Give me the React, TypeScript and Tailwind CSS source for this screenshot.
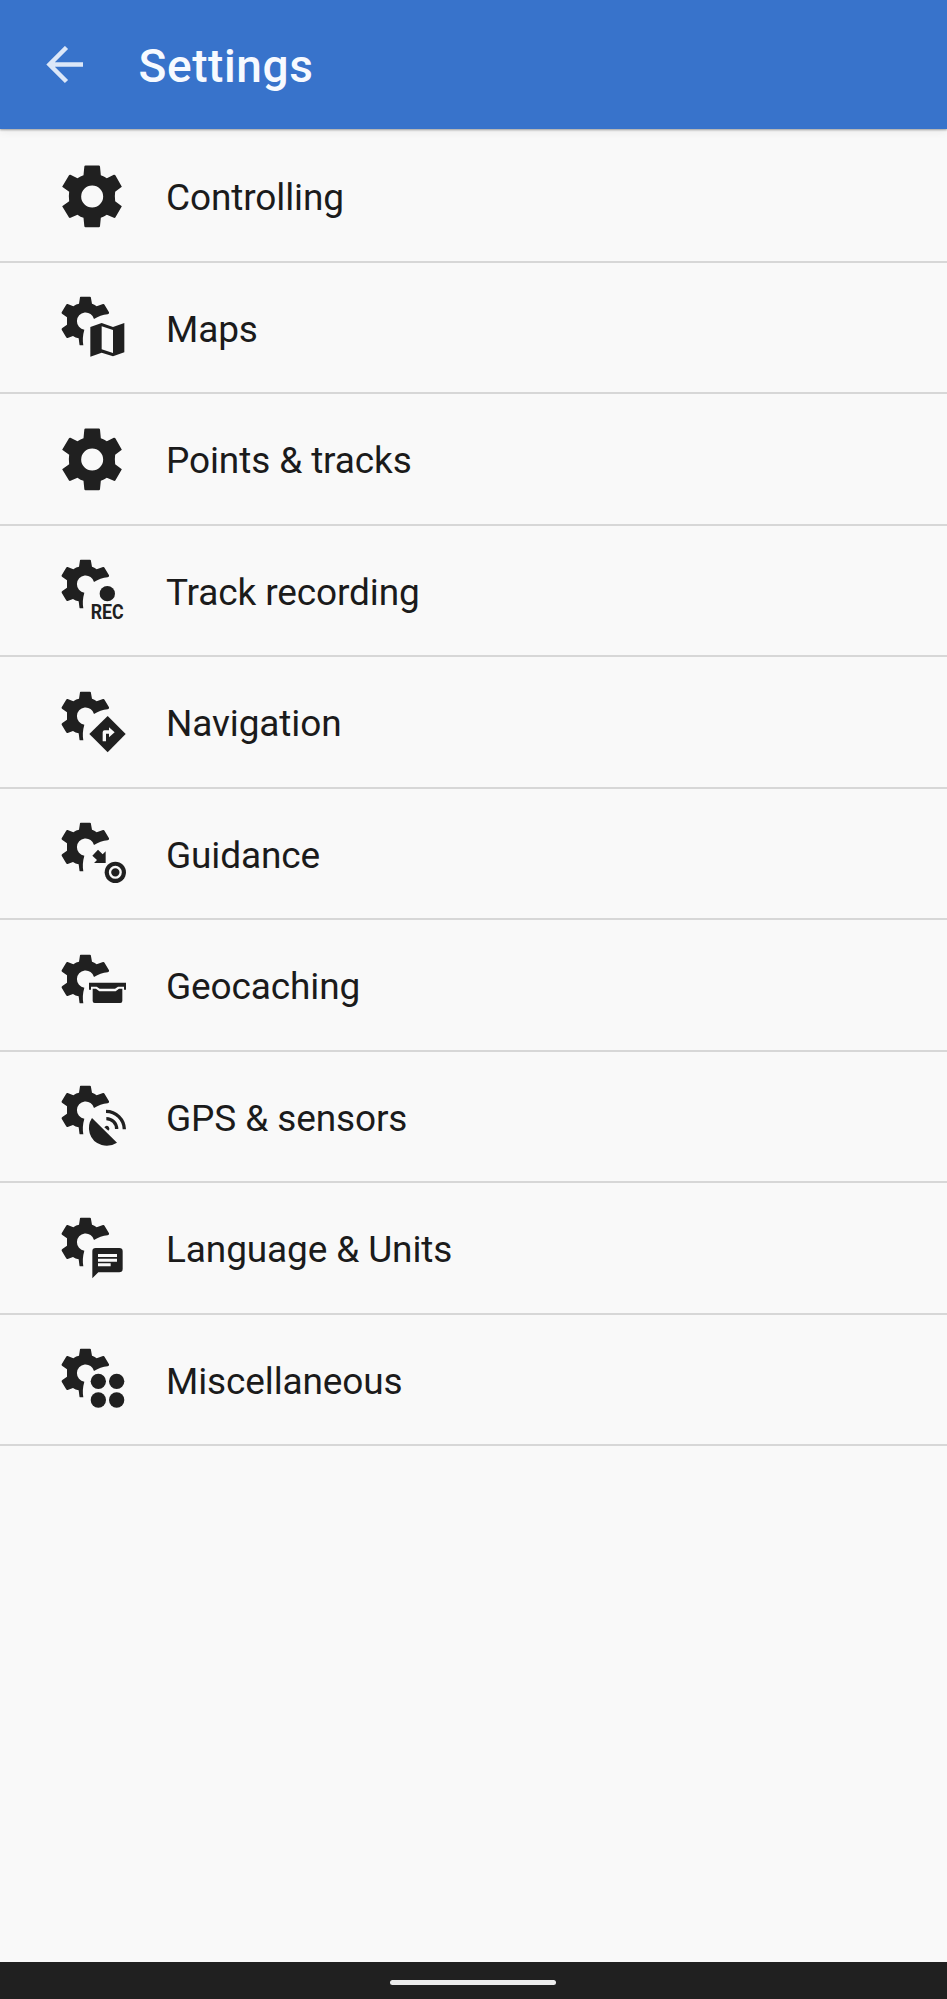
import type { ReactNode } from "react";

function PartialGear() {
  return (
    <path d="M92 35H120Q122 35 122.500 37L126 56Q133 58 140 64L159 57Q162 56 163.500 59L177 82Q179 87 173 88Q151 90 132 102A26 26 0 1 0 103 134Q96 158 100 181H91Q89 181 88.500 179L86 160Q76 158 69 153L53 159Q50 160 48.500 157L35 134Q34 131 37 129L51 119V97L36 86Q34 84 35 82L48.500 59Q50 56 53 57L70 64Q79 57 87 56L90 37Q90 35 92 35Z" />
  );
}

const FullGear = (
  <path
    fillRule="evenodd"
    transform="translate(-0.500 4.500)"
    d="M107 30H147Q150 30 150.500 33L153 59Q162 62 171 68L192 58Q195 57 196.500 59L216 94L196 109Q194 123 196 137L216 152L196.500 186Q195 188 192 187L171 178Q162 184 153 187L150.500 212Q150 215 147 215H107Q104 215 103.500 212L101 187Q92 185 83 178L62 187Q59 188 57.500 186L37 152L58 137Q56 123 58 109L37 94L57.500 59Q59 57 62 58L83 68Q92 62 101 59L103.500 33Q104 30 107 30ZM127 90A33 33 0 1 0 127 156A33 33 0 1 0 127 90Z"
  />
);

const MapBadge = (
  <path fillRule="evenodd" d="M121 126L155 114L189 126L223 114V202L189 214L155 203L121 215ZM155 124V193L189 204V135Z" />
);

const RecBadge = (
  <>
    <circle cx="172" cy="137" r="23" />
    <text x="122" y="213" fontSize="60" fontWeight="700" textLength="99" lengthAdjust="spacingAndGlyphs">
      REC
    </text>
  </>
);

const TurnBadge = (
  <>
    <path d="M173 108L227 162L173 217L118 162Z" />
    <path d="M158 184V157Q158 151 164 151H177V142L194 157L177 172V161H168V184Z" fill="#f9f9f9" />
  </>
);

const TargetBadge = (
  <>
    <path d="M144 116L158 130L167 121V156H132L141 147L127 134Z" />
    <circle cx="196" cy="184" r="32" />
    <circle cx="196" cy="184" r="16" fill="none" stroke="#f9f9f9" strokeWidth="7" />
  </>
);

const CacheBadge = (
  <>
    <path d="M117 119H228V140H222V131H204L195 137H149L140 131H123V140H117Z" />
    <path d="M128 137H138L148 145H197L207 137H217V174Q217 180 211 180H134Q128 180 128 174Z" />
  </>
);

const DishBadge = (
  <>
    <path d="M126 132L201 206Q179 220 155 213Q127 205 119 178Q112 153 126 132Z" />
    <path d="M163 160Q169 152 176 158Q181 164 175 170Z" />
    <g fill="none" stroke="#202020" strokeWidth="10">
      <path d="M168 112A55 55 0 0 1 223 166" />
      <path d="M169 134A31 31 0 0 1 200 165" />
    </g>
  </>
);

const MessageBadge = (
  <>
    <path d="M137 126H208Q218 126 218 136V189Q218 199 208 199H145L127 217V136Q127 126 137 126Z" />
    <path d="M144 144H201V153H144ZM144 158H201V167H144ZM144 172H182V181H144Z" fill="#f9f9f9" />
  </>
);

const DotsBadge = (
  <>
    <circle cx="145" cy="133" r="23" />
    <circle cx="200" cy="133" r="23" />
    <circle cx="145" cy="189" r="23" />
    <circle cx="200" cy="189" r="23" />
  </>
);

const items: { label: string; badge?: ReactNode }[] = [
  { label: "Controlling" },
  { label: "Maps", badge: MapBadge },
  { label: "Points & tracks" },
  { label: "Track recording", badge: RecBadge },
  { label: "Navigation", badge: TurnBadge },
  { label: "Guidance", badge: TargetBadge },
  { label: "Geocaching", badge: CacheBadge },
  { label: "GPS & sensors", badge: DishBadge },
  { label: "Language & Units", badge: MessageBadge },
  { label: "Miscellaneous", badge: DotsBadge },
];

export default function App() {
  return (
    <div className="flex h-[1999px] w-full flex-col overflow-hidden bg-[#f9f9f9] font-['Roboto',sans-serif]">
      <header className="z-10 flex h-[129px] shrink-0 items-center bg-[#3873cb] pl-[46px] shadow-[0_1px_2px_rgba(0,0,0,0.35),0_3px_8px_rgba(0,0,0,0.06)]">
        <svg className="h-[38px] w-[38px]" viewBox="0 0 38 38" fill="none" stroke="#dce7f8" strokeWidth="4.500">
          <path d="M20.500 1.500L3.500 18.500L20.500 35.500M3 18.500H37" />
        </svg>
        <h1 className="ml-[54.500px] mt-[2px] text-[46px] leading-none font-medium tracking-[0.6px] text-[#f7faff]">Settings</h1>
      </header>
      <main className="mt-[2.200px] grow">
        {items.map(({ label, badge }) => (
          <div key={label} className="flex h-[131.500px] items-start border-b-2 border-[#d7d7d7] pl-[50px] pt-[22.600px]">
            <svg className="h-[80px] w-[90px] shrink-0" viewBox="0 0 270 240" fill="#202020">
              {badge ? (
                <>
                  <PartialGear />
                  {badge}
                </>
              ) : (
                FullGear
              )}
            </svg>
            <span className="ml-[26px] mt-[22.700px] text-[37px] leading-[44px] tracking-[-0.120px] text-[#1b1b1b]">{label}</span>
          </div>
        ))}
      </main>
      <footer className="flex h-[37px] shrink-0 items-center justify-center bg-[#202020] pt-[4px] pr-[1px]">
        <div className="h-[5px] w-[166px] rounded-full bg-[#ececec]" />
      </footer>
    </div>
  );
}
